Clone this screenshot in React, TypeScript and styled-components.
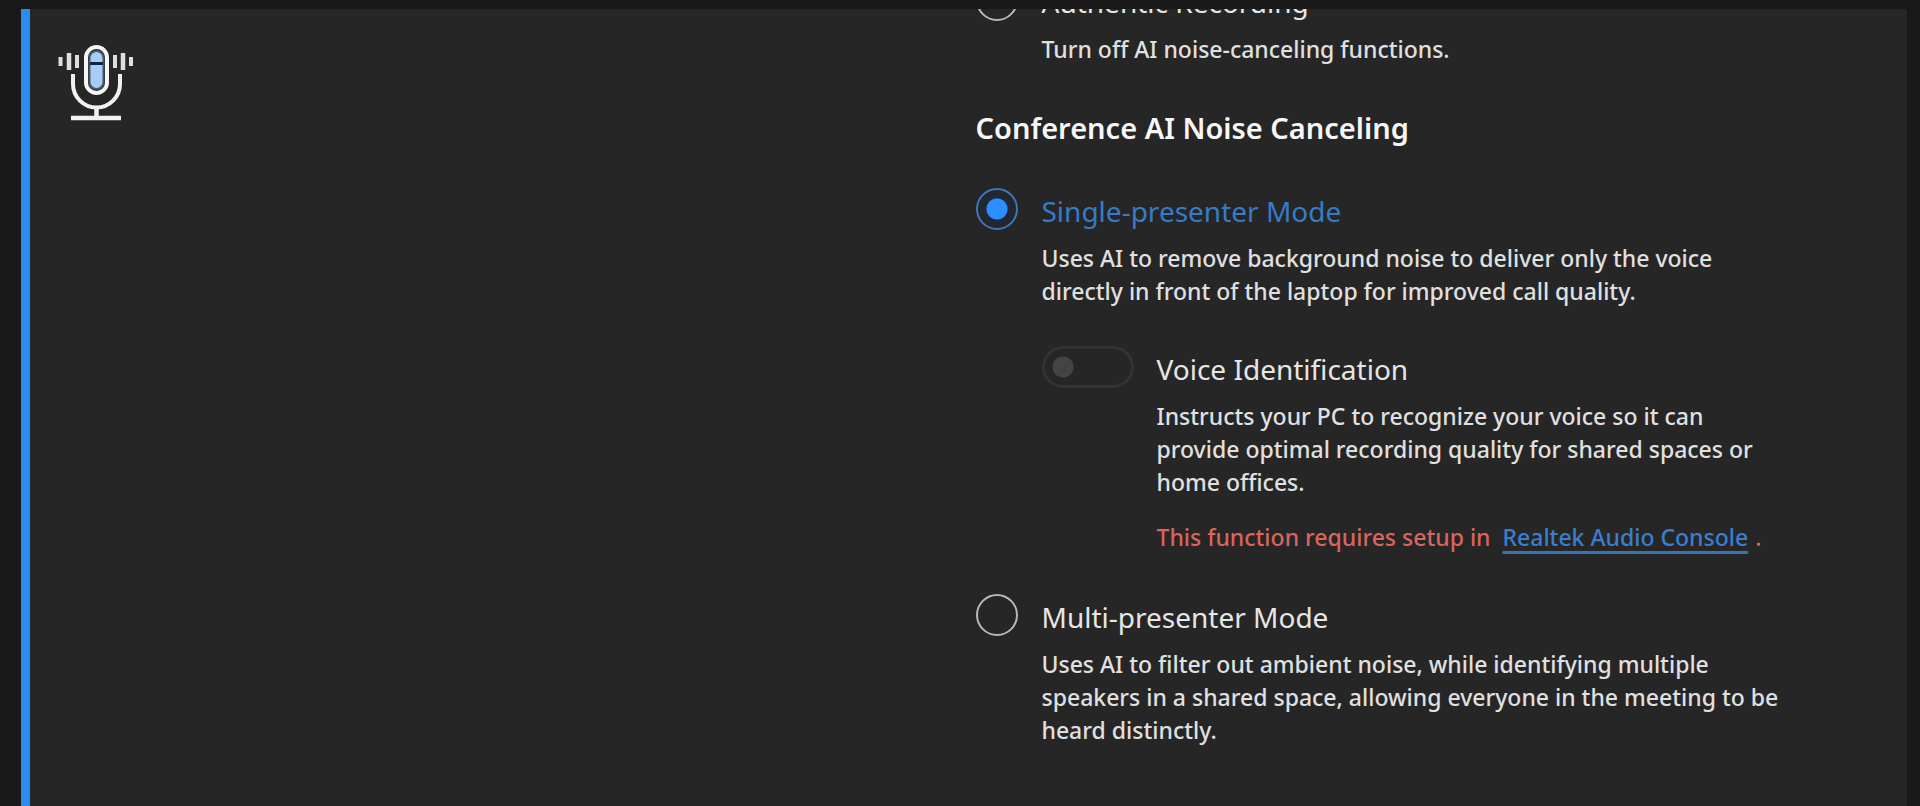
import React, { useState } from "react";
import styled, { createGlobalStyle } from "styled-components";

const GlobalStyle = createGlobalStyle`
  * { box-sizing: border-box; }
  body {
    margin: 0;
    background: #191919;
    color: #e0e0e0;
    font-family: "Noto Sans", "Open Sans", sans-serif;
    font-size: 23px;
    font-weight: 500;
    line-height: 33px;
  }
  h2, p { margin: 0; }
`;

const Window = styled.div`
  display: flex;
  height: 100vh;
  padding: 9px 13px 0 21px;
`;

const Panel = styled.main`
  flex: 1;
  display: grid;
  grid-template-columns: 1fr 1fr;
  column-gap: 16px;
  align-items: start;
  padding: 0 30px 0 28px;
  overflow: hidden;
  background: #262626;
  border-left: 9px solid #2d8cf0;
`;

const MicIcon = styled.svg`
  display: block;
  margin-top: 35px;
`;

const Settings = styled.form`
  max-width: 804px;
  margin-top: -30px;
`;

const Heading = styled.h2`
  margin: 42px 0 40px;
  color: #f7f7f7;
  font-size: 29px;
  font-weight: 600;
  line-height: 40px;
`;

const Option = styled.div`
  display: grid;
  grid-template-columns: 42px 1fr;
  column-gap: 24px;

  & + & {
    margin-top: 40px;
  }
`;

const Radio = styled.input`
  appearance: none;
  width: 42px;
  height: 42px;
  margin: 0;
  border: 2px solid #b8b8b8;
  border-radius: 50%;

  &:checked {
    border-color: #3a78bf;
    background: radial-gradient(circle, #2d8fff 10px, #1b2a40 11px, transparent 17px);
  }
`;

const SubOption = styled.div`
  display: grid;
  grid-template-columns: 92px 1fr;
  column-gap: 23px;
  margin-top: 38px;
`;

const Switch = styled.input`
  appearance: none;
  width: 92px;
  height: 42px;
  margin: 0;
  border: 3px solid #333333;
  border-radius: 21px;
  background: radial-gradient(circle at 18px 50%, #444444 10px, transparent 11px);
`;

const Title = styled.label<{ $active?: boolean }>`
  display: block;
  margin-bottom: 8px;
  color: ${(p) => (p.$active ? "#377bc8" : "#e6e6e6")};
  font-size: 28px;
  font-weight: 400;
  line-height: 46px;
`;

const Warning = styled.p`
  margin-top: 22px;
  color: #d9655d;
`;

const ConsoleLink = styled.a`
  margin: 0 7px 0 6px;
  color: #3a7fce;
  text-decoration: underline 3px #3674b8;
  text-underline-offset: 5px;
  text-decoration-skip-ink: none;
`;

type ModeProps = {
  id: string;
  title: string;
  description: string;
  selected: string;
  onSelect: (id: string) => void;
  children?: React.ReactNode;
};

function Mode({ id, title, description, selected, onSelect, children }: ModeProps) {
  const active = selected === id;
  return (
    <Option>
      <Radio type="radio" name="mode" id={id} checked={active} onChange={() => onSelect(id)} />
      <div>
        <Title htmlFor={id} $active={active}>{title}</Title>
        <p>{description}</p>
        {children}
      </div>
    </Option>
  );
}

export default function App() {
  const [selected, setSelected] = useState("single");
  return (
    <>
      <GlobalStyle />
      <Window>
        <Panel>
          <MicIcon width="78" height="78" viewBox="0 0 78 78" fill="none" aria-hidden="true">
            <rect x="28" y="3" width="21" height="46" rx="10.5" stroke="#f6f6f6" strokeWidth="4" />
            <rect x="31.5" y="7" width="14" height="38" rx="7" fill="#a6cdf8" stroke="#4a5663" strokeWidth="2" />
            <path d="M32 19.5h13" stroke="#0d2742" strokeWidth="3" />
            <path d="M15 30v10a23.5 23.5 0 0 0 47 0V30" stroke="#f2f2f2" strokeWidth="4" />
            <path d="M38.500 63v10M13 74h50" stroke="#f2f2f2" strokeWidth="4.500" />
            <path d="M2.500 13v9M19 11v13M57 11v13M73 13v9" stroke="#dedede" strokeWidth="4" />
            <path d="M11 9v17M65 9v17" stroke="#dedede" strokeWidth="4.500" />
          </MicIcon>
          <Settings>
            <Mode
              id="authentic"
              title="Authentic Recording"
              description="Turn off AI noise-canceling functions."
              selected={selected}
              onSelect={setSelected}
            />
            <Heading>Conference AI Noise Canceling</Heading>
            <Mode
              id="single"
              title="Single-presenter Mode"
              description="Uses AI to remove background noise to deliver only the voice directly in front of the laptop for improved call quality."
              selected={selected}
              onSelect={setSelected}
            >
              <SubOption>
                <Switch type="checkbox" role="switch" id="voice-id" disabled />
                <div>
                  <Title htmlFor="voice-id">Voice Identification</Title>
                  <p>
                    Instructs your PC to recognize your voice so it can provide optimal recording
                    quality for shared spaces or home offices.
                  </p>
                  <Warning>
                    This function requires setup in <ConsoleLink href="#console">Realtek Audio Console</ConsoleLink>.
                  </Warning>
                </div>
              </SubOption>
            </Mode>
            <Mode
              id="multi"
              title="Multi-presenter Mode"
              description="Uses AI to filter out ambient noise, while identifying multiple speakers in a shared space, allowing everyone in the meeting to be heard distinctly."
              selected={selected}
              onSelect={setSelected}
            />
          </Settings>
        </Panel>
      </Window>
    </>
  );
}
